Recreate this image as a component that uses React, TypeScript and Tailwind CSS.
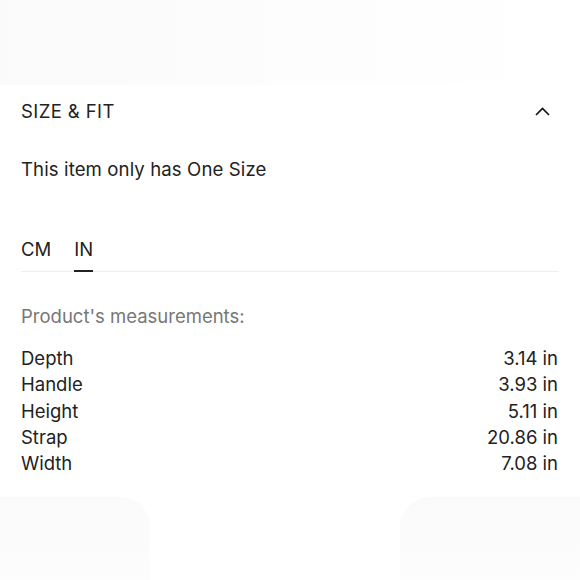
const rows = [
  { label: "Depth", value: "3.14 in" },
  { label: "Handle", value: "3.93 in" },
  { label: "Height", value: "5.11 in" },
  { label: "Strap", value: "20.86 in" },
  { label: "Width", value: "7.08 in" },
];

function ChevronUp() {
  return (
    <svg width="15" height="9" viewBox="0 0 15 9" fill="none" className="mr-[9px]">
      <path d="M1 8 L7.5 1.5 L14 8" stroke="#111" strokeWidth="1.6" />
    </svg>
  );
}

export default function App() {
  return (
    <div className="min-h-[580px] w-[580px] bg-white font-['Inter',sans-serif] text-[#222]">
      <div className="h-[85px] bg-gradient-to-r from-[#fafafa] via-[#fdfdfd] to-white" />

      <div className="bg-white px-[21px] pt-[13px] pb-[21px]">
        <div className="flex h-[26px] items-center justify-between">
          <span className="text-[18.5px] leading-[26px] tracking-[0.4px]">SIZE &amp; FIT</span>
          <ChevronUp />
        </div>

        <p className="mt-[32px] text-[18.6px] leading-[26px] tracking-[0.1px]">This item only has One Size</p>

        <div className="mt-[54px] flex gap-[23px] border-b border-[#eeeeee]">
          <button className="pb-[9px] text-[18.5px] leading-[26px] text-[#222]">CM</button>
          <button className="-mb-px border-b-[2px] border-[#222] pb-[8px] text-[18.5px] leading-[26px] text-[#222]">
            IN
          </button>
        </div>

        <p className="mt-[31px] text-[18.5px] leading-[26px] text-[#777]">Product's measurements:</p>

        <div className="mt-[16px] flex flex-col pr-px">
          {rows.map((r) => (
            <div key={r.label} className="flex justify-between text-[18.5px] leading-[26.3px]">
              <span>{r.label}</span>
              <span>{r.value}</span>
            </div>
          ))}
        </div>
      </div>

      <div className="flex h-[85px] justify-between bg-white">
        <div className="h-full w-[150px] rounded-tr-[30px] bg-gradient-to-b from-[#fafafa] to-[#fdfdfd]" />
        <div className="h-full w-[180px] rounded-tl-[30px] bg-gradient-to-b from-[#fafafa] to-[#fdfdfd]" />
      </div>
    </div>
  );
}
